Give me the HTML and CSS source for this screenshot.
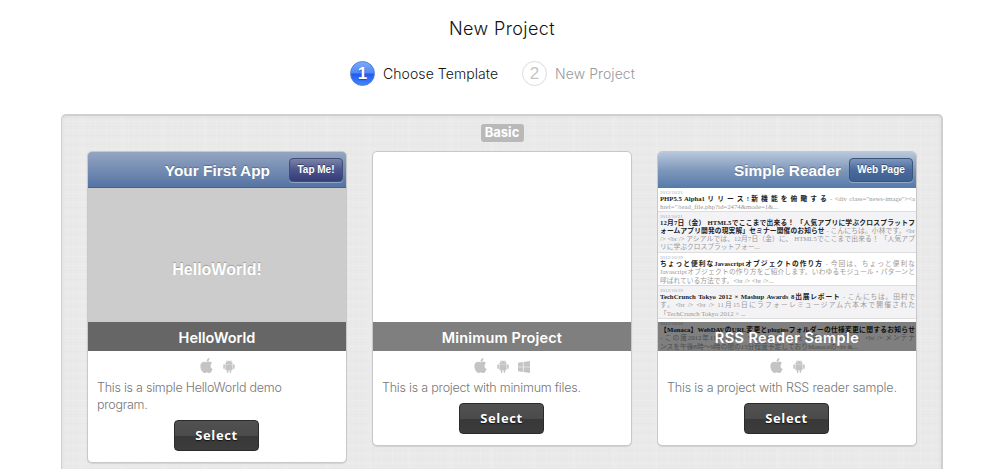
FILE: index.html
```html
<!DOCTYPE html>
<html lang="en">
<head>
<meta charset="utf-8">
<title>New Project</title>
<link rel="stylesheet" href="styles.css">
</head>
<body>
<svg class="defs" width="0" height="0">
  <symbol id="apple" viewBox="0 0 24 24"><path d="M12.152 6.896c-.948 0-2.415-1.078-3.96-1.04-2.04.027-3.91 1.183-4.961 3.014-2.117 3.675-.546 9.103 1.519 12.09 1.013 1.454 2.208 3.09 3.792 3.039 1.52-.065 2.09-.987 3.935-.987 1.831 0 2.35.987 3.96.948 1.637-.026 2.676-1.48 3.676-2.948 1.156-1.688 1.636-3.325 1.662-3.415-.039-.013-3.182-1.221-3.22-4.857-.026-3.04 2.48-4.494 2.597-4.559-1.429-2.09-3.623-2.324-4.39-2.376-2-.156-3.675 1.09-4.61 1.09zM15.53 3.83c.843-1.012 1.4-2.427 1.245-3.83-1.207.052-2.662.805-3.532 1.818-.78.896-1.454 2.338-1.273 3.714 1.338.104 2.715-.688 3.559-1.701"/></symbol>
  <symbol id="android" viewBox="0 0 12 13"><path d="M2.4 3.9C2.5 2.6 3.2 1.8 4 1.3L3.4.3l.3-.2.7 1a4 4 0 0 1 3.2 0l.7-1 .3.2L8 1.3c.8.5 1.5 1.3 1.6 2.6z"/><path d="M2.4 4.3h7.2v5.2a.8.8 0 0 1-.8.8H8.2v1.8a.8.8 0 0 1-1.6 0v-1.8H5.4v1.8a.8.8 0 0 1-1.6 0v-1.8h-.6a.8.8 0 0 1-.8-.8z"/><rect x=".3" y="4.3" width="1.6" height="4.8" rx=".8"/><rect x="10.1" y="4.3" width="1.6" height="4.8" rx=".8"/><circle cx="4.5" cy="2.6" r=".35" fill="#fff"/><circle cx="7.5" cy="2.6" r=".35" fill="#fff"/></symbol>
  <symbol id="windows" viewBox="0 0 12 12"><path d="M0 1.7l4.9-.7v4.7H0zM5.5.9L12 0v5.7H5.5zM0 6.3h4.9V11L0 10.3zM5.5 6.3H12V12l-6.5-.9z"/></symbol>
</svg>
<h1 class="title">New Project</h1>
<div class="steps">
  <div class="step active"><span class="num">1</span><span class="label">Choose Template</span></div>
  <div class="step"><span class="num">2</span><span class="label">New Project</span></div>
</div>
<main class="panel">
  <div class="category"><span class="tag">Basic</span></div>
  <div class="cards">
    <article class="card">
      <div class="preview hello">
        <div class="bar purple"><span class="bar-title">Your First App</span><span class="bar-btn">Tap Me!</span></div>
        <div class="hello-text">HelloWorld!</div>
        <h2 class="name n1">HelloWorld</h2>
      </div>
      <div class="icons"><svg class="apple"><use href="#apple"/></svg><svg class="android"><use href="#android"/></svg></div>
      <p class="desc d1">This is a simple HelloWorld demo<br>program.</p>
      <button class="select">Select</button>
    </article>
    <article class="card">
      <div class="preview"><h2 class="name n2">Minimum Project</h2></div>
      <div class="icons"><svg class="apple"><use href="#apple"/></svg><svg class="android"><use href="#android"/></svg><svg class="windows"><use href="#windows"/></svg></div>
      <p class="desc d2">This is a project with minimum files.</p>
      <button class="select">Select</button>
    </article>
    <article class="card">
      <div class="preview">
        <div class="bar blue"><span class="bar-title">Simple Reader</span><span class="bar-btn">Web Page</span></div>
        <div class="feed">
          <div class="item short">
            <div class="date">2012/10/21</div>
            <div class="line full"><b>PHP5.5 Alpha1 リ リ ー ス ! 新 機 能 を 俯 瞰 す る</b> - &lt;div class="news-image"&gt;&lt;a</div>
            <div class="line">href="/read_file.php?id=2474&amp;mode=1&amp;...</div>
          </div>
          <div class="item alt tall">
            <div class="date">2012/10/21</div>
            <div class="line full"><b>12月7日（金） HTML5でここまで出来る！ 「人気アプリに学ぶクロスプラットフ</b></div>
            <div class="line full"><b>ォームアプリ開発の現実解」セミナー開催のお知らせ</b> - こんにちは。小林です。&lt;br</div>
            <div class="line full">/&gt; &lt;br /&gt; アシアルでは、12月7日（金）に、 HTML5でここまで出来る！ 「人気アプ</div>
            <div class="line">リに学ぶクロスプラットフォー...</div>
          </div>
          <div class="item">
            <div class="date">2012/10/19</div>
            <div class="line full"><b>ちょっと便利なJavascriptオブジェクトの作り方</b> - 今回は、ちょっと便利な</div>
            <div class="line full">Javascriptオブジェクトの作り方をご紹介します。いわゆるモジュール・パターンと</div>
            <div class="line">呼ばれている方法です。&lt;br /&gt; &lt;br /&gt;...</div>
          </div>
          <div class="item alt">
            <div class="date">2012/10/19</div>
            <div class="line full"><b>TechCrunch Tokyo 2012 × Mashup Awards 8出展レポート</b> - こんにちは。田村で</div>
            <div class="line full">す。&lt;br /&gt; &lt;br /&gt; 11月15日にラフォーレミュージアム六本木で開催された</div>
            <div class="line">「TechCrunch Tokyo 2012 × ...</div>
          </div>
          <div class="item last">
            <div class="date">2012/10/16</div>
            <div class="line full"><b>【Monaca】WebDAVのURL変更とpluginsフォルダーの仕様変更に関するお知らせ</b></div>
            <div class="line full">- この度2012年11月から、WebDAVのURLを変更いたします。&lt;br /&gt; メンテナ</div>
            <div class="line">ンスを午後8時～9時の間の15分程度予定しておりMonacaの&lt;br &amp;...</div>
          </div>
        </div>
        <h2 class="name n3">RSS Reader Sample</h2>
      </div>
      <div class="icons"><svg class="apple"><use href="#apple"/></svg><svg class="android"><use href="#android"/></svg></div>
      <p class="desc d3">This is a project with RSS reader sample.</p>
      <button class="select">Select</button>
    </article>
  </div>
</main>
</body>
</html>
```
FILE: styles.css
```css
* { box-sizing: border-box; }
body { margin: 0; height: 469px; overflow: hidden; background: #fff; font-family: Inter, "Liberation Sans", sans-serif; }
.defs { display: block; }
.title { margin: 0; padding: 17px 0 0 4px; font-size: 18px; line-height: 24px; font-weight: 300; text-align: center; color: #111; letter-spacing: .4px; }
.steps { display: flex; gap: 25px; margin: 19px 0 0 350px; }
.step { display: flex; align-items: center; gap: 8px; height: 26px; font-size: 14px; font-weight: 300; color: #999; letter-spacing: .08px; white-space: nowrap; }
.step .label { width: 81px; padding-top: 1px; }
.step.active .label { width: 114px; }
.step.active { color: #111; }
.num { width: 25px; height: 25px; border: 1px solid #dcdcdc; border-radius: 50%; display: flex; align-items: center; justify-content: center; font: 17px/1 "Liberation Sans", sans-serif; color: #c4c4c4; letter-spacing: 0; }
.active .num { border-color: #4c7fd8; color: #fff; font-weight: 700; background: linear-gradient(#7fa8f8, #5088f6 48%, #2258ee 52%, #4585ff); text-shadow: 0 1px 1px #1b4bb0; }
.panel { width: 882px; height: 370px; margin: 28px 0 0 61px; border: 2px solid #cfcfcf; border-radius: 5px 5px 0 0; border-left-width: 1px;
  background-color: #e9e9e9;
  background-image:
    repeating-linear-gradient(90deg, rgba(255,255,255,.1) 0 1px, transparent 1px 5px, rgba(255,255,255,.06) 5px 6px, transparent 6px 11px),
    repeating-linear-gradient(0deg, rgba(255,255,255,.12) 0 1px, transparent 1px 4px, rgba(0,0,0,.008) 4px 5px, transparent 5px 9px),
    repeating-linear-gradient(90deg, transparent 0 17px, rgba(255,255,255,.07) 17px 22px, transparent 22px 41px);
  box-shadow: inset 0 0 4px rgba(0,0,0,.05); }
.category { display: flex; justify-content: center; padding: 8px 0 0 1px; height: 35px; }
.tag { height: 18px; width: 43px; text-align: center; border-radius: 3px; background: #b9b9b9; color: #fff; font-weight: 700; font-size: 13px; line-height: 17px; }
.cards { display: flex; align-items: flex-start; gap: 25px; padding-left: 25px; }
.card { width: 260px; padding-bottom: 11px; background: #fff; border: 1px solid #c8c8c8; border-radius: 5px; box-shadow: 0 1px 1px rgba(0,0,0,.1); display: flex; flex-direction: column; align-items: center; overflow: hidden; }
.preview { position: relative; width: 100%; height: 199px; overflow: hidden; }
.hello { background: #ccc; }
.bar { display: flex; align-items: center; justify-content: flex-end; gap: 8px; height: 36px; padding: 0 3px 1px 0; font-family: "Liberation Sans", sans-serif; font-weight: 700; color: #fff; white-space: nowrap; }
.purple { gap: 19px; padding-bottom: 0; background: linear-gradient(#94a5c1, #5574a4); border-bottom: 1px solid #465f8c; }
.blue { background: linear-gradient(#b8c8dd, #7f98bb 50%, #557aa9); }
.bar-title { padding-top: 2px; font-size: 15.4px; text-shadow: 0 -1px 1px rgba(0,0,0,.25); }
.bar-btn { width: 54px; height: 24px; border: 1px solid #424c76; border-radius: 4px; text-align: center; font-size: 10px; line-height: 22px; background: linear-gradient(#7c83a8, #4b548a 50%, #343d79); box-shadow: 0 1px 0 rgba(255,255,255,.3); text-shadow: 0 -1px 0 rgba(0,0,0,.4); }
.blue .bar-btn { width: 64px; border-color: #3d5479; background: linear-gradient(#7c95bd, #4b6b9b 50%, #3d5f92); }
.hello-text { padding-top: 73px; text-align: center; font: 700 16px/18px "Liberation Sans", sans-serif; color: #fff; text-shadow: 0 -1px 1px rgba(0,0,0,.25); }
.name { position: absolute; left: 0; bottom: 0; width: 100%; height: 29px; margin: 0; background: rgba(0,0,0,.5); color: #fff; font-size: 14.5px; font-weight: 600; line-height: 31px; text-align: center; }
.n2 { letter-spacing: .15px; }
.n3 { letter-spacing: .4px; }
.icons { display: flex; gap: 9px; align-items: flex-end; height: 22px; margin-right: 1px; fill: #c4c4c4; }
.icons svg { display: block; }
.apple { width: 15px; height: 15px; }
.android { width: 12px; height: 13px; }
.windows { width: 12px; height: 12px; }
.desc { width: 100%; margin: 6px 0 0; padding-left: 9px; font-size: 12.5px; line-height: 17px; font-weight: 300; color: #777; white-space: nowrap; letter-spacing: -.22px; }
.d1 { letter-spacing: -.25px; }
.d3 { letter-spacing: -.17px; }
.select { width: 85px; height: 31px; margin: 7px 1px 0 0; padding: 0 0 1px; border: 1px solid #2b2b2b; border-radius: 4px; color: #fff; font: 700 13px/28px "Open Sans", sans-serif; letter-spacing: .6px; background: linear-gradient(#515151, #4b4b4b 50%, #383838 50%, #3c3c3c); text-shadow: 0 1px 1px #111; }
.feed { font-family: "Liberation Serif", "Noto Sans CJK JP", serif; font-size: 6.75px; line-height: 8.3px; color: #999; }
.item { height: 33px; padding: 2px 1px 0 2px; border-bottom: 1px solid #ddd; background: #fff; overflow: hidden; }
.item.short { height: 23.5px; }
.item.tall { height: 41.5px; }
.item.alt { background: #f3f2f5; }
.date { font-size: 5px; line-height: 5px; color: #8fb0c4; }
.line { height: 8.3px; white-space: nowrap; }
.line.full { white-space: normal; text-align: justify; text-align-last: justify; line-break: anywhere; }
.line b { color: #222; }
```
